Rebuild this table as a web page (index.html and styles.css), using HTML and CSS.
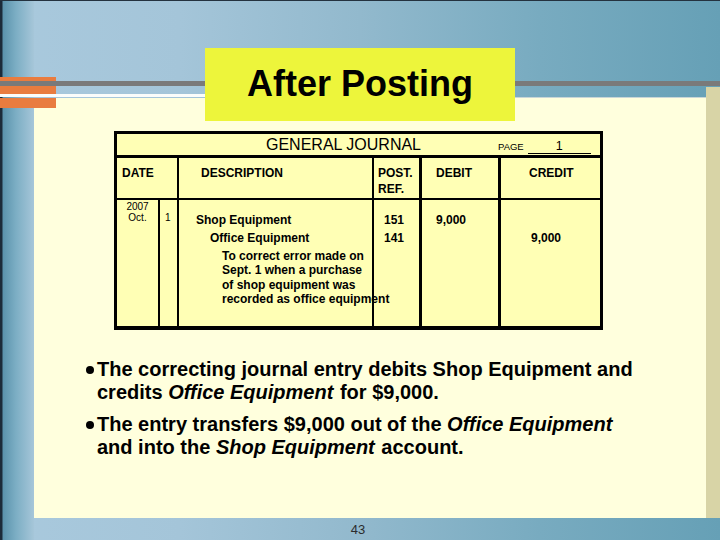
FILE: index.html
```html
<!DOCTYPE html>
<html lang="en">
<head>
<meta charset="utf-8">
<title>After Posting</title>
<link rel="stylesheet" href="styles.css">
</head>
<body>
<div class="slide">
  <div class="edge"></div>
  <div class="rail"></div>
  <header class="head">
    <div class="title">After Posting</div>
  </header>
  <main class="panel">
    <section class="journal">
      <div class="j-title">
        <span class="j-name">GENERAL JOURNAL</span>
        <span class="j-page">PAGE</span>
        <span class="j-pageno">1</span>
      </div>
      <div class="j-cols">
        <div class="col col-date">
          <div class="hd hd-date">DATE</div>
          <div class="bd bd-date">
            <div class="date-yr">2007<br>Oct.</div>
            <div class="date-day">1</div>
          </div>
        </div>
        <div class="col col-desc">
          <div class="hd hd-desc">DESCRIPTION</div>
          <div class="bd bd-desc">
            <div class="acct-dr">Shop Equipment</div>
            <div class="acct-cr">Office Equipment</div>
            <div class="note">To correct error made on<br>Sept. 1 when a purchase<br>of shop equipment was<br>recorded as office equipment</div>
          </div>
        </div>
        <div class="col col-post">
          <div class="hd hd-post">POST.<br>REF.</div>
          <div class="bd bd-post">151<br>141</div>
        </div>
        <div class="col col-debit">
          <div class="hd hd-debit">DEBIT</div>
          <div class="bd bd-debit">9,000</div>
        </div>
        <div class="col col-credit">
          <div class="hd hd-credit">CREDIT</div>
          <div class="bd bd-credit">9,000</div>
        </div>
      </div>
    </section>
    <ul class="points">
      <li><span class="dot"></span><span class="pt">The correcting journal entry debits Shop Equipment and credits <em>Office Equipment</em> for $9,000.</span></li>
      <li><span class="dot"></span><span class="pt">The entry transfers $9,000 out of the <em>Office Equipment</em> and into the <em>Shop Equipment</em> account.</span></li>
    </ul>
  </main>
  <footer class="foot">43</footer>
  <div class="deco orange-a"></div>
  <div class="deco gray-line"></div>
  <div class="deco white-line"></div>
  <div class="deco thin-line"></div>
  <div class="deco orange-b"></div>
</div>
</body>
</html>
```
FILE: styles.css
```css
html, body {
  margin: 0;
  padding: 0;
}

body {
  font-family: "Liberation Sans", Arial, sans-serif;
  color: #000;
}

.slide {
  width: 720px;
  height: 540px;
  position: relative;
  overflow: hidden;
  box-sizing: border-box;
  border-top: 1px solid #24323f;
  background: linear-gradient(90deg, #a9c9dd 0%, #a4c5d9 25%, #92b9cd 50%, #78abc0 75%, #66a0b6 100%);
  display: grid;
  grid-template-columns: 34px 672px 14px;
  grid-template-rows: 97px 420px 22px;
}

.edge {
  grid-column: 1;
  grid-row: 1 / 4;
  background: linear-gradient(90deg, #1c2b3a 0, #1c2b3a 2px, #5b93ad 3px, #7caec4 16px, #a6c6d9 34px);
}

.rail {
  grid-column: 3;
  grid-row: 2;
  margin-top: -11px;
  background: #d8d4a6;
}

.head {
  grid-column: 1 / 4;
  grid-row: 1;
  display: flex;
  justify-content: center;
  align-items: flex-start;
  padding-top: 47px;
  position: relative;
  z-index: 3;
}

.title {
  width: 310px;
  height: 73px;
  flex: none;
  background: #edf53b;
  display: flex;
  align-items: center;
  justify-content: center;
  font-size: 36px;
  font-weight: bold;
  line-height: 40px;
  padding-bottom: 2px;
  box-sizing: border-box;
}

.panel {
  grid-column: 2;
  grid-row: 2;
  background: #ffffdd;
  padding-top: 33px;
  box-sizing: border-box;
}

/* ---------- journal ---------- */
.journal {
  width: 489px;
  margin-left: 80px;
  box-sizing: border-box;
  border: 3px solid #000;
  border-bottom-width: 4px;
  background: #ffffb5;
}

.j-title {
  height: 19px;
  padding: 2px 0 0 149px;
  border-bottom: 3px solid #000;
  display: flex;
  align-items: baseline;
}

.j-name {
  font-size: 16px;
  line-height: 18px;
}

.j-page {
  font-size: 9.5px;
  margin-left: 77px;
}

.j-pageno {
  display: inline-block;
  width: 63px;
  margin-left: 4px;
  border-bottom: 1.5px solid #000;
  text-align: center;
  font-size: 12.5px;
  line-height: 13px;
}

.j-cols {
  display: flex;
  height: 168px;
}

.col {
  display: flex;
  flex-direction: column;
  flex: none;
  border-right: 2px solid #000;
}

.col-date { width: 60px; }
.col-desc { width: 193px; position: relative; }
.col-post { width: 45px; border-right-width: 3px; }
.col-debit { width: 76px; border-right-width: 3px; }
.col-credit { width: 99px; border-right: 0; }

.col-desc::after {
  content: "";
  position: absolute;
  top: 0;
  bottom: 0;
  right: -2px;
  width: 2px;
  background: #000;
}

.hd {
  height: 42px;
  box-sizing: border-box;
  border-bottom: 2px solid #000;
  padding-top: 7px;
  font-size: 12px;
  font-weight: bold;
  line-height: 16px;
}

.hd-date { padding-left: 5px; }
.hd-desc { padding-left: 22px; }
.hd-post { padding-left: 4px; }
.hd-debit { padding-left: 14px; }
.hd-credit { padding-left: 28px; }

.bd {
  flex: 1;
  font-size: 12px;
  font-weight: bold;
  line-height: 18px;
}

.bd-date {
  display: flex;
  font-weight: normal;
  font-size: 10px;
  line-height: 11px;
}

.date-yr {
  width: 41px;
  flex: none;
  border-right: 2px solid #000;
  text-align: center;
  padding-top: 1px;
}

.date-day {
  padding: 12px 0 0 5px;
}

.bd-desc {
  padding-top: 11px;
  white-space: nowrap;
}

.acct-dr { padding-left: 17px; }
.acct-cr { padding-left: 31px; }

.note {
  padding-left: 43px;
  margin-top: 2px;
  line-height: 14.4px;
}

.bd-post {
  padding: 11px 15px 0 0;
  text-align: right;
}

.bd-debit {
  padding: 11px 0 0 14px;
}

.bd-credit {
  padding: 29px 0 0 30px;
}

/* ---------- bullets ---------- */
.points {
  list-style: none;
  margin: 28px 0 0 52px;
  padding: 0;
  font-size: 20px;
  font-weight: bold;
  line-height: 22.5px;
}

.points li {
  display: flex;
  align-items: flex-start;
}

.points li + li {
  margin-top: 10px;
}

.dot {
  width: 8px;
  height: 8px;
  flex: none;
  margin-top: 7.5px;
  margin-right: 3px;
  border-radius: 50%;
  background: #000;
}

.pt {
  width: 548px;
}

.pt em {
  font-style: italic;
  padding-right: 1px;
}

/* ---------- footer ---------- */
.foot {
  grid-column: 1 / 4;
  grid-row: 3;
  text-align: center;
  padding-right: 4px;
  padding-top: 1px;
  font-size: 13px;
  line-height: 22px;
  color: #2c2c2c;
  position: relative;
  z-index: 1;
}

/* ---------- decorative overlays ---------- */
.deco {
  position: absolute;
  z-index: 2;
}

.orange-a {
  left: 0;
  top: 76px;
  width: 56px;
  height: 17px;
  background: #e97c3f;
}

.gray-line {
  left: 0;
  top: 80px;
  width: 720px;
  height: 5px;
  background: #7a7a7a;
}

.white-line {
  left: 0;
  top: 93px;
  width: 205px;
  height: 3px;
  background: #fbfdfb;
}

.thin-line {
  left: 515px;
  top: 96px;
  width: 191px;
  height: 1px;
  background: #c9d6d6;
}

.orange-b {
  left: 0;
  top: 97px;
  width: 56px;
  height: 10px;
  background: #e97c3f;
}
```
